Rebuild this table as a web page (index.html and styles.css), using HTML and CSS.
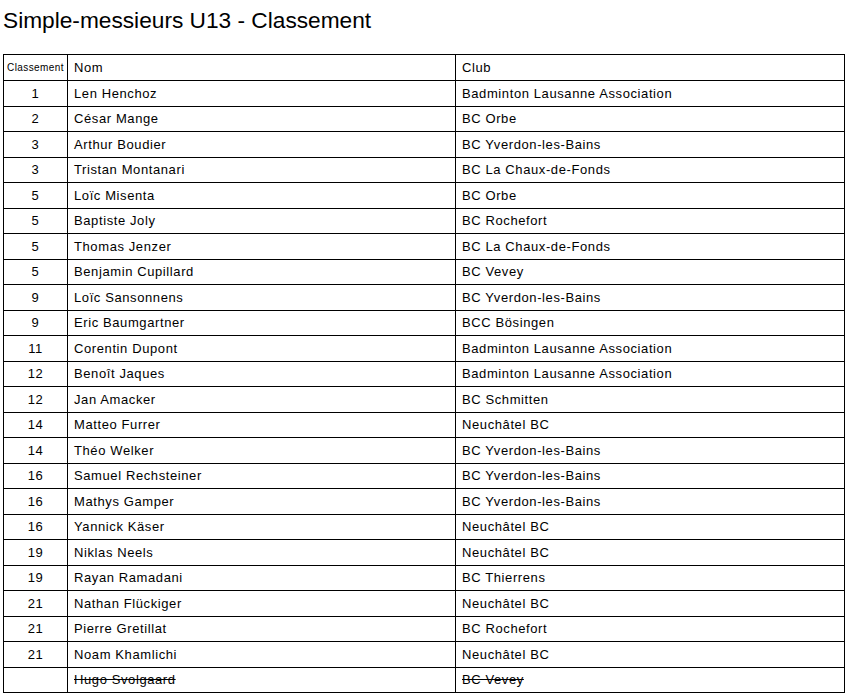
FILE: index.html
```html
<!DOCTYPE html>
<html lang="fr">
<head>
<meta charset="utf-8">
<title>Simple-messieurs U13 - Classement</title>
<link rel="stylesheet" href="styles.css">
</head>
<body>
<h1 class="title">Simple-messieurs U13 - Classement</h1>
<table class="ranking">
<colgroup>
<col class="col-rank">
<col class="col-name">
<col class="col-club">
</colgroup>
<thead>
<tr><th class="rank head-small">Classement</th><th>Nom</th><th>Club</th></tr>
</thead>
<tbody>
<tr><td class="rank">1</td><td>Len Henchoz</td><td>Badminton Lausanne Association</td></tr>
<tr><td class="rank">2</td><td>César Mange</td><td>BC Orbe</td></tr>
<tr><td class="rank">3</td><td>Arthur Boudier</td><td>BC Yverdon-les-Bains</td></tr>
<tr><td class="rank">3</td><td>Tristan Montanari</td><td>BC La Chaux-de-Fonds</td></tr>
<tr><td class="rank">5</td><td>Loïc Misenta</td><td>BC Orbe</td></tr>
<tr><td class="rank">5</td><td>Baptiste Joly</td><td>BC Rochefort</td></tr>
<tr><td class="rank">5</td><td>Thomas Jenzer</td><td>BC La Chaux-de-Fonds</td></tr>
<tr><td class="rank">5</td><td>Benjamin Cupillard</td><td>BC Vevey</td></tr>
<tr><td class="rank">9</td><td>Loïc Sansonnens</td><td>BC Yverdon-les-Bains</td></tr>
<tr><td class="rank">9</td><td>Eric Baumgartner</td><td>BCC Bösingen</td></tr>
<tr><td class="rank">11</td><td>Corentin Dupont</td><td>Badminton Lausanne Association</td></tr>
<tr><td class="rank">12</td><td>Benoît Jaques</td><td>Badminton Lausanne Association</td></tr>
<tr><td class="rank">12</td><td>Jan Amacker</td><td>BC Schmitten</td></tr>
<tr><td class="rank">14</td><td>Matteo Furrer</td><td>Neuchâtel BC</td></tr>
<tr><td class="rank">14</td><td>Théo Welker</td><td>BC Yverdon-les-Bains</td></tr>
<tr><td class="rank">16</td><td>Samuel Rechsteiner</td><td>BC Yverdon-les-Bains</td></tr>
<tr><td class="rank">16</td><td>Mathys Gamper</td><td>BC Yverdon-les-Bains</td></tr>
<tr><td class="rank">16</td><td>Yannick Käser</td><td>Neuchâtel BC</td></tr>
<tr><td class="rank">19</td><td>Niklas Neels</td><td>Neuchâtel BC</td></tr>
<tr><td class="rank">19</td><td>Rayan Ramadani</td><td>BC Thierrens</td></tr>
<tr><td class="rank">21</td><td>Nathan Flückiger</td><td>Neuchâtel BC</td></tr>
<tr><td class="rank">21</td><td>Pierre Gretillat</td><td>BC Rochefort</td></tr>
<tr><td class="rank">21</td><td>Noam Khamlichi</td><td>Neuchâtel BC</td></tr>
<tr class="withdrawn"><td class="rank"></td><td>Hugo Svolgaard</td><td>BC Vevey</td></tr>
</tbody>
</table>
</body>
</html>
```
FILE: styles.css
```css
html, body {
  margin: 0;
  padding: 0;
  background: #ffffff;
}
body {
  padding: 0 3px;
  font-family: "Liberation Sans", Arial, sans-serif;
  color: #000000;
}
.title {
  margin: 0;
  padding-top: 6px;
  height: 54px;
  box-sizing: border-box;
  font-size: 22.7px;
  font-weight: normal;
  line-height: 28px;
}
.ranking {
  border-collapse: collapse;
  width: 842px;
  table-layout: fixed;
  font-size: 13px;
  letter-spacing: 0.6px;
}
.col-rank {
  width: 64px;
}
.col-name {
  width: 388px;
}
.col-club {
  width: 389px;
}
.ranking th,
.ranking td {
  border: 1px solid #000000;
  padding: 0 6px;
  height: 24.5px;
  text-align: left;
  font-weight: normal;
  line-height: 15px;
  white-space: nowrap;
  overflow: hidden;
}
.ranking thead th {
  height: 25px;
}
.ranking th.rank,
.ranking td.rank {
  padding: 0;
  text-align: center;
}
.head-small {
  font-size: 10px;
  letter-spacing: 0.4px;
}
.withdrawn td {
  text-decoration: line-through;
}
```
